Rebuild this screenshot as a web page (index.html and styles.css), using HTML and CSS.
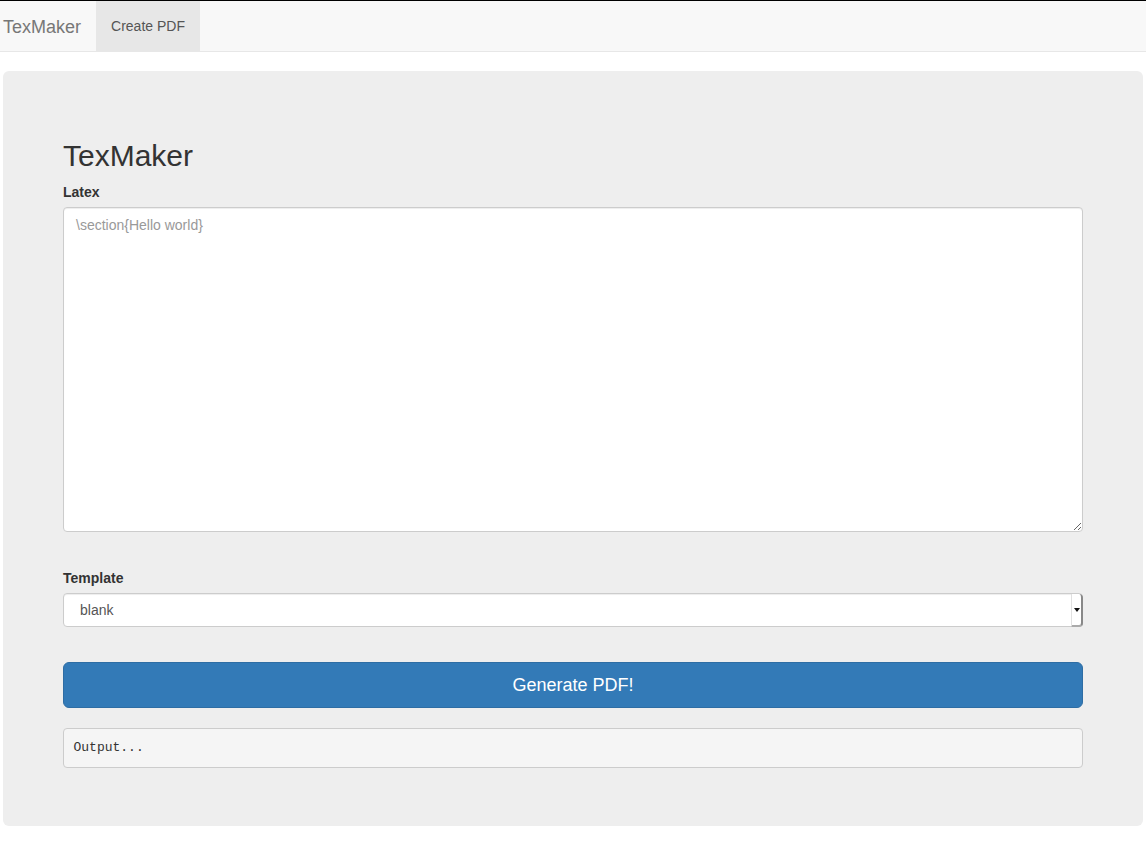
FILE: index.html
```html
<!DOCTYPE html>
<html>
<head>
<meta charset="utf-8">
<title>TexMaker</title>
<link rel="stylesheet" href="styles.css">
</head>
<body>
<nav class="navbar">
  <a class="brand" href="#">TexMaker</a>
  <ul class="nav">
    <li class="active"><a href="#">Create PDF</a></li>
  </ul>
</nav>
<main class="jumbotron">
  <h2 class="title">TexMaker</h2>
  <div class="form-group form-group-latex">
    <label class="label" for="latex">Latex</label>
    <textarea id="latex" class="form-control textarea" placeholder="\section{Hello world}"></textarea>
  </div>
  <div class="form-group form-group-template">
    <label class="label" for="template">Template</label>
    <div class="select-wrap">
      <select id="template" class="form-control select">
        <option>blank</option>
      </select>
      <span class="select-arrow"></span>
    </div>
  </div>
  <button class="btn-primary" type="button">Generate PDF!</button>
  <pre class="output">Output...</pre>
</main>
</body>
</html>
```

FILE: styles.css
```css
* { box-sizing: border-box; }

html, body {
  margin: 0;
  padding: 0;
  background: #fff;
}

body {
  font-family: "Liberation Sans", Arial, sans-serif;
  font-size: 14px;
  line-height: 1.42857;
  color: #333;
}

.navbar {
  display: flex;
  align-items: stretch;
  height: 52px;
  background: #f8f8f8;
  border-top: 1px solid #000;
  border-bottom: 1px solid #e7e7e7;
  margin-bottom: 19px;
}

.brand {
  display: block;
  padding: 16px 15px 0 3px;
  font-size: 18px;
  line-height: 20px;
  color: #777;
  text-decoration: none;
}

.nav {
  display: flex;
  list-style: none;
  margin: 0;
  padding: 0;
}

.nav li a {
  display: block;
  padding: 15px 15px;
  line-height: 20px;
  color: #555;
  text-decoration: none;
  height: 50px;
}

.nav li.active a {
  background: #e7e7e7;
}

.jumbotron {
  margin: 0 3px;
  padding: 48px 60px;
  background: #eee;
  border-radius: 6px;
}

.title {
  margin: 20px 0 10px;
  font-size: 30px;
  font-weight: 500;
  line-height: 1.1;
  color: #333;
}

.label {
  display: block;
  font-weight: bold;
  margin-bottom: 5px;
  line-height: 20px;
}

.form-group-latex { margin-bottom: 36px; }
.form-group-template { margin-bottom: 35px; }

.form-control {
  display: block;
  width: 100%;
  font-family: "Liberation Sans", Arial, sans-serif;
  font-size: 14px;
  line-height: 1.42857;
  color: #555;
  background: #fff;
  border: 1px solid #ccc;
  border-radius: 4px;
  box-shadow: inset 0 1px 1px rgba(0,0,0,.075);
  margin: 0;
}

.textarea {
  height: 325px;
  padding: 8px 12px 4px;
  resize: vertical;
}

.textarea::placeholder { color: #999; }

.select-wrap {
  position: relative;
}

.select {
  height: 34px;
  padding: 7px 12px 5px 16px;
  -webkit-appearance: none;
  appearance: none;
}

.select-arrow {
  position: absolute;
  top: 1px;
  right: 0;
  width: 12px;
  height: 33px;
  border-right: 2px solid #888;
  border-bottom: 2px solid #aaa;
  border-left: 1px solid #e0e0e0;
  border-radius: 0 4px 4px 0;
  background: #fff;
  pointer-events: none;
}

.select-arrow::after {
  content: "";
  position: absolute;
  left: 2px;
  top: 14px;
  border-left: 3px solid transparent;
  border-right: 3px solid transparent;
  border-top: 4px solid #111;
}

.btn-primary {
  display: block;
  width: 100%;
  height: 46px;
  padding: 11px 16px 9px;
  font-family: "Liberation Sans", Arial, sans-serif;
  font-size: 18px;
  line-height: 1.3333;
  color: #fff;
  background: #337ab7;
  border: 1px solid #2e6da4;
  border-radius: 6px;
  margin: 0 0 20px;
  cursor: pointer;
}

.output {
  margin: 0 0 10px;
  padding: 9.5px;
  font-family: "Liberation Mono", "DejaVu Sans Mono", monospace;
  font-size: 13px;
  line-height: 1.42857;
  color: #333;
  background: #f5f5f5;
  border: 1px solid #ccc;
  border-radius: 4px;
}
```
